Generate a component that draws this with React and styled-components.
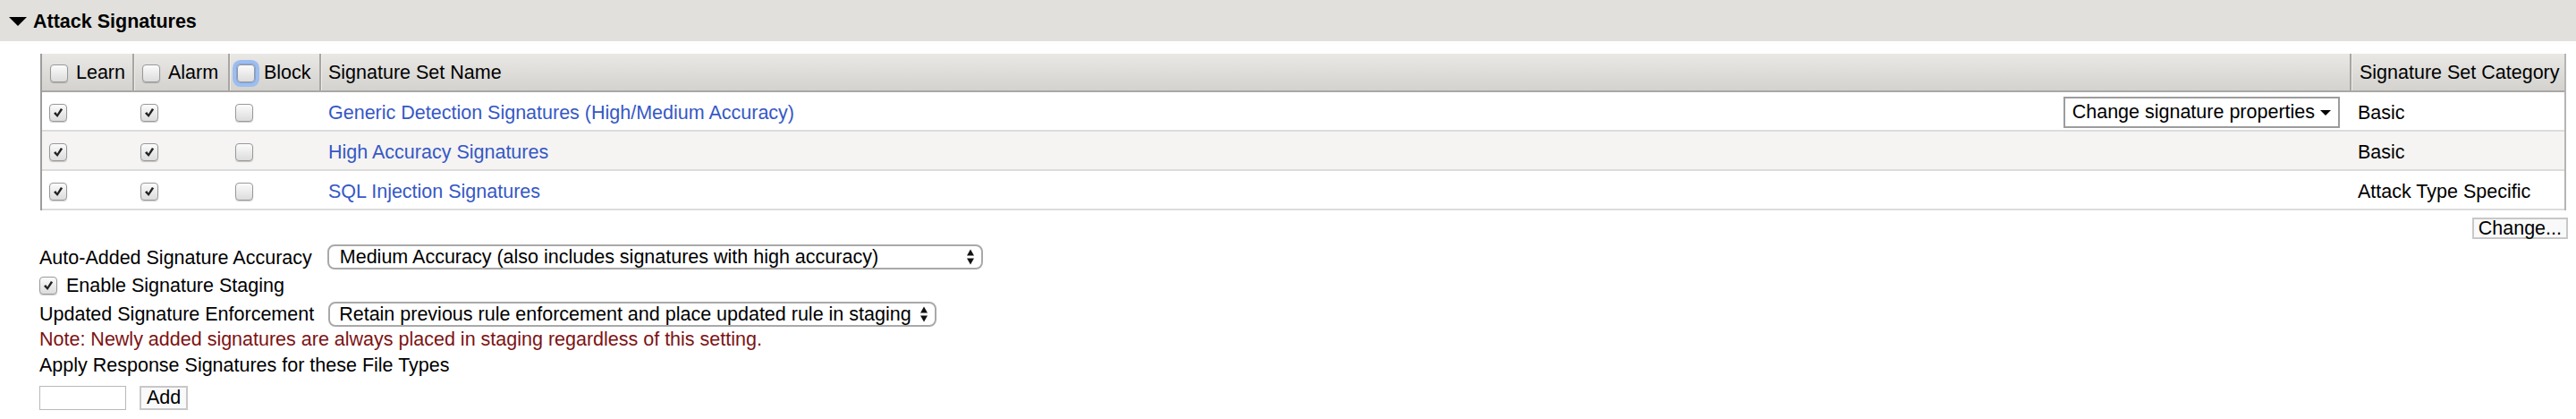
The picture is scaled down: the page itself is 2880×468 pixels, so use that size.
import React from 'react';
import styled, { createGlobalStyle } from 'styled-components';

const GlobalStyle = createGlobalStyle`
  html, body { margin: 0; padding: 0; background: #fff; }
  body {
    font-family: "Liberation Sans", Arial, Helvetica, sans-serif;
    font-size: 21.5px;
    color: #000;
  }
  * { box-sizing: border-box; }
`;

const Page = styled.div`
  width: 2880px;
`;

const SectionBar = styled.div`
  height: 46px;
  background: #e1e0dd;
  display: flex;
  align-items: center;
  padding-left: 10px;
  padding-top: 2px;
  gap: 7px;
`;

const SectionTitle = styled.span`
  font-weight: bold;
  font-size: 21.5px;
  line-height: 1;
  padding-top: 2px;
`;

const Content = styled.div`
  padding: 14px 9px 0 44px;
  display: flex;
  flex-direction: column;
`;

const cols = '101px 107px 102px 1fr 240px';

const Grid = styled.div`
  margin: 0 2px 0 1px;
  border-left: 2px solid #9d9d9d;
  border-right: 2px solid #b5b5b5;
`;

const HeadRow = styled.div`
  display: grid;
  grid-template-columns: ${cols};
  height: 43px;
  background: linear-gradient(#e9e8e5, #d3d2cf);
  border-bottom: 2px solid #a9a8a5;
`;

const HeadCell = styled.div`
  display: flex;
  align-items: center;
  gap: ${(p) => (p.$gap != null ? p.$gap : 9)}px;
  padding-left: ${(p) => p.$pad}px;
  padding-top: 3px;
  border-left: ${(p) => (p.$first ? 'none' : '2px solid #a7a6a3')};
  box-shadow: ${(p) => (p.$first ? 'none' : 'inset 1px 0 0 #efeeeb')};
  white-space: nowrap;
  line-height: 1;
`;

const BodyRow = styled.div`
  display: grid;
  grid-template-columns: ${cols};
  height: 44px;
  background: ${(p) => (p.$alt ? '#f5f4f2' : '#fff')};
  border-bottom: 2px solid #dcdcdc;
`;

const BodyCell = styled.div`
  display: flex;
  align-items: center;
  justify-content: ${(p) => (p.$spread ? 'space-between' : 'flex-start')};
  padding-left: ${(p) => p.$pad}px;
  padding-right: ${(p) => p.$padR || 0}px;
  padding-top: 4px;
  margin-left: ${(p) => (p.$first ? 0 : 2)}px;
  white-space: nowrap;
  line-height: 1;
`;

const CellText = styled.span`
  position: relative;
  top: 1px;
`;

const SetLink = styled.a`
  color: #3658c6;
  text-decoration: none;
  cursor: pointer;
  position: relative;
  top: 1px;
`;

const BoxWrap = styled.span`
  flex: none;
  width: 20px;
  height: 20px;
  border: 1px solid #999;
  border-radius: 4px;
  background: linear-gradient(#fbfbfb, #dcdcdc);
  box-shadow: ${(p) =>
    p.$focus
      ? '0 0 0 1px #7fa6e4, 0 0 0 5px #9dbdf0'
      : '0 1px 1px rgba(0,0,0,0.2)'};
  display: inline-flex;
  align-items: center;
  justify-content: center;
`;

const Check = ({ checked, focus }) => (
  <BoxWrap $focus={focus}>
    {checked && (
      <svg width="16" height="16" viewBox="0 0 18 18">
        <path d="M3.4 9.8 L5.8 8 L7.8 10.8 L12.3 3.4 L14.8 4.9 L8.1 14.6 Z" fill="#222" />
      </svg>
    )}
  </BoxWrap>
);

const PropsMenu = styled.div`
  height: 35px;
  border: 2px solid #9c9c9c;
  background: #fff;
  display: flex;
  align-items: center;
  gap: 6px;
  padding: 2px 8px 0 8px;
  margin-top: -2px;
  color: #000;
`;

const ActionRow = styled.div`
  display: flex;
  justify-content: flex-end;
  margin-top: 8px;
  height: 24px;
`;

const PlainButton = styled.button`
  font-family: "Liberation Sans", Arial, sans-serif;
  font-size: 21.5px;
  line-height: 20px;
  height: ${(p) => p.$h}px;
  padding: 0 ${(p) => p.$px}px;
  border: 2px solid #c8c8c8;
  background: #f9f9f9;
  color: #000;
  border-radius: 0;
  margin: 0;
`;

const FieldRow = styled.div`
  display: flex;
  align-items: center;
  gap: ${(p) => p.$gap}px;
  height: ${(p) => p.$h}px;
  margin-top: ${(p) => p.$mt || 0}px;
  white-space: nowrap;
`;

const Label = styled.span`
  line-height: 1;
  padding-top: ${(p) => p.$pt || 0}px;
`;

const SelectBox = styled.div`
  width: ${(p) => p.$w}px;
  height: 28px;
  border: 2px solid #a9a9a9;
  border-radius: 8px;
  background: #fff;
  display: flex;
  align-items: center;
  justify-content: space-between;
  padding: 2px 7px 0 ${(p) => p.$pl}px;
  overflow: hidden;
  line-height: 1;
`;

const Note = styled.div`
  color: #7d1313;
  height: 28px;
  line-height: 28px;
`;

const Plain = styled.div`
  height: 30px;
  line-height: 30px;
`;

const TextInput = styled.input`
  width: 97px;
  height: 27px;
  border: 1px solid #b9b9b9;
  padding: 0 4px;
  font-family: inherit;
  font-size: 21.5px;
  margin: 0;
`;

const UpDown = () => (
  <svg width="10" height="20" viewBox="0 0 10 20" style={{ marginTop: -2 }}>
    <polygon points="1,8.5 9,8.5 5,1.5" fill="#111" />
    <polygon points="1,11.5 9,11.5 5,18.5" fill="#111" />
  </svg>
);

const rows = [
  { name: 'Generic Detection Signatures (High/Medium Accuracy)', cat: 'Basic', menu: true },
  { name: 'High Accuracy Signatures', cat: 'Basic' },
  { name: 'SQL Injection Signatures', cat: 'Attack Type Specific' },
];

export default function App() {
  return (
    <Page>
      <GlobalStyle />
      <SectionBar>
        <svg width="20" height="12" viewBox="0 0 20 12">
          <polygon points="0,1 20,1 10,11" fill="#000" />
        </svg>
        <SectionTitle>Attack Signatures</SectionTitle>
      </SectionBar>
      <Content>
        <Grid>
          <HeadRow>
            <HeadCell $first $pad={9}>
              <Check />
              <span>Learn</span>
            </HeadCell>
            <HeadCell $pad={9}>
              <Check />
              <span>Alarm</span>
            </HeadCell>
            <HeadCell $pad={8} $gap={10}>
              <Check focus />
              <span>Block</span>
            </HeadCell>
            <HeadCell $pad={8}>Signature Set Name</HeadCell>
            <HeadCell $pad={9}>Signature Set Category</HeadCell>
          </HeadRow>
          {rows.map((r, i) => (
            <BodyRow key={r.name} $alt={i === 1}>
              <BodyCell $first $pad={8}>
                <Check checked />
              </BodyCell>
              <BodyCell $pad={7}>
                <Check checked />
              </BodyCell>
              <BodyCell $pad={6}>
                <Check />
              </BodyCell>
              <BodyCell $pad={8} $padR={11} $spread>
                <SetLink>{r.name}</SetLink>
                {r.menu && (
                  <PropsMenu>
                    <span>Change signature properties</span>
                    <svg width="12" height="8" viewBox="0 0 12 8">
                      <polygon points="0,1 12,1 6,7" fill="#000" />
                    </svg>
                  </PropsMenu>
                )}
              </BodyCell>
              <BodyCell $pad={7}>
                <CellText>{r.cat}</CellText>
              </BodyCell>
            </BodyRow>
          ))}
        </Grid>
        <ActionRow>
          <PlainButton $h={24} $px={5}>Change...</PlainButton>
        </ActionRow>
        <FieldRow $gap={17} $h={28} $mt={6}>
          <Label $pt={3}>Auto-Added Signature Accuracy</Label>
          <SelectBox $w={733} $pl={12}>
            <span>Medium Accuracy (also includes signatures with high accuracy)</span>
            <UpDown />
          </SelectBox>
        </FieldRow>
        <FieldRow $gap={10} $h={36}>
          <Check checked />
          <Label $pt={2}>Enable Signature Staging</Label>
        </FieldRow>
        <FieldRow $gap={16} $h={28}>
          <Label $pt={1}>Updated Signature Enforcement</Label>
          <SelectBox $w={680} $pl={10}>
            <span>Retain previous rule enforcement and place updated rule in staging</span>
            <UpDown />
          </SelectBox>
        </FieldRow>
        <Note>Note: Newly added signatures are always placed in staging regardless of this setting.</Note>
        <Plain>Apply Response Signatures for these File Types</Plain>
        <FieldRow $gap={15} $h={28} $mt={7}>
          <TextInput type="text" />
          <PlainButton $h={27} $px={6}>Add</PlainButton>
        </FieldRow>
      </Content>
    </Page>
  );
}
